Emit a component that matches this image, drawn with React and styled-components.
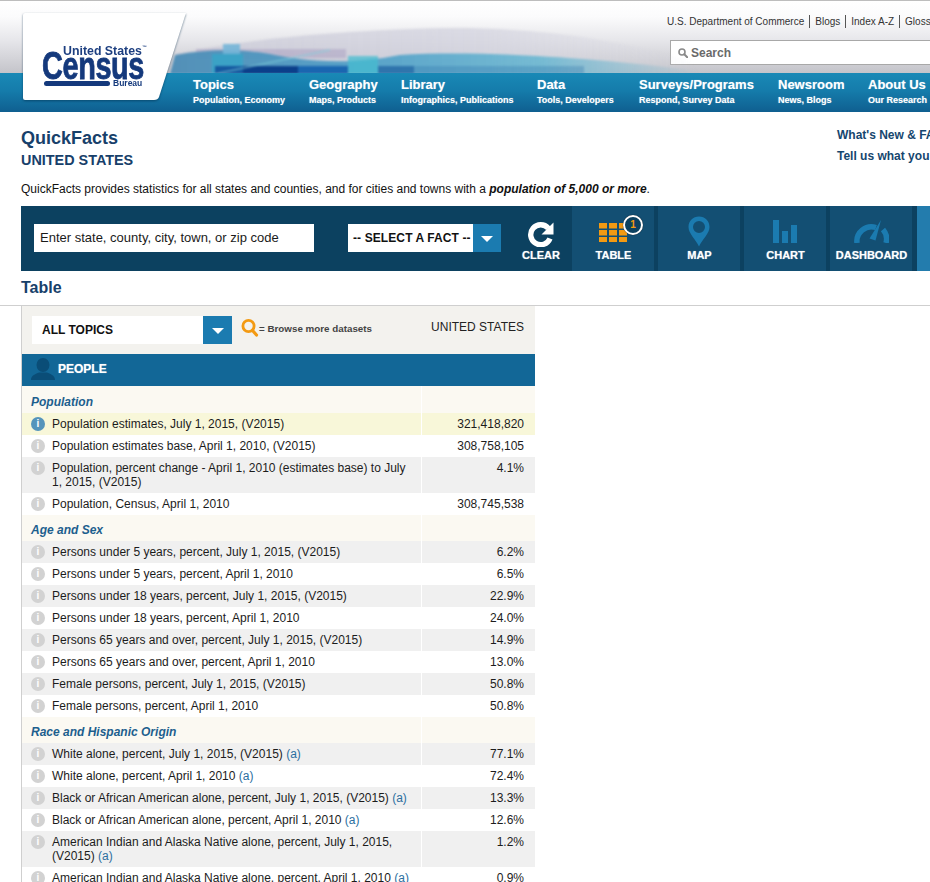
import React from "react";
import styled, { createGlobalStyle } from "styled-components";

const Global = createGlobalStyle`
  html, body { margin: 0; padding: 0; background: #fff; overflow: hidden; }
  body { font-family: "Liberation Sans", Arial, sans-serif; color: #1c1c1c; }
`;

const Page = styled.div`
  width: 930px;
  height: 882px;
  overflow: hidden;
  position: relative;
`;

const Header = styled.header`
  position: relative;
  height: 112px;
  border-top: 1px solid #bdbdbd;
  box-sizing: border-box;
  overflow: hidden;
  display: flex;
  flex-direction: column;
  background: #fff;
`;

const Masthead = styled.div`
  height: 72px;
  flex: none;
  box-sizing: border-box;
  padding: 14px 0 0 667px;
  background: linear-gradient(#ffffff 0, #fbfbfc 22%, #e6e6ea 55%, #c4c4ca 100%);
  position: relative;
  z-index: 1;
`;

const TopLinks = styled.div`
  display: flex;
  align-items: center;
  white-space: nowrap;
  font-size: 10px;
  line-height: 13px;
  height: 13px;
  color: #333;
`;

const TopLink = styled.span`
  padding: 0 5px 0 0;
  margin-right: 5px;
  border-right: ${(p) => (p.$last ? "none" : "1.5px solid #555")};
`;

const SearchBox = styled.div`
  margin: 12px 0 0 3px;
  width: 300px;
  height: 25px;
  background: #fff;
  border: 1px solid #a8a8a8;
  border-right: none;
  box-sizing: border-box;
  display: flex;
  align-items: center;
  gap: 3px;
  padding-left: 7px;
  color: #6a6a6a;
  font-size: 12px;
  font-weight: bold;
`;

const Wave = styled.svg`
  position: absolute;
  left: 170px;
  top: 20px;
  z-index: 2;
  filter: blur(1px);
`;

const Nav = styled.nav`
  height: 39px;
  flex: none;
  display: flex;
  gap: 24px;
  box-sizing: border-box;
  padding: 4px 0 0 193px;
  background: linear-gradient(#1989b6 0, #157cab 45%, #0f5f90 100%);
  white-space: nowrap;
  position: relative;
  z-index: 3;
`;

const NavItem = styled.div`
  width: ${(p) => p.$w}px;
  flex: none;
  color: #fff;
  text-shadow: 0 0 1px rgba(255, 255, 255, 0.5);
`;

const NavTitle = styled.div`
  font-size: 13px;
  font-weight: bold;
  line-height: 16px;
`;

const NavSub = styled.div`
  font-size: 9px;
  font-weight: bold;
  line-height: 12px;
  margin-top: 1px;
`;

const LogoCard = styled.div`
  position: absolute;
  left: 23px;
  top: 12px;
  width: 165px;
  height: 88px;
  z-index: 4;
  filter: drop-shadow(0 1px 1px rgba(0, 40, 70, 0.55));
`;

const LogoShape = styled.svg`
  position: absolute;
  inset: 0;
`;

const LogoUS = styled.div`
  position: absolute;
  left: 40px;
  top: 31px;
  font-size: 13px;
  font-weight: bold;
  color: #1d3f80;
  transform: scaleX(0.95);
  transform-origin: left;
  white-space: nowrap;
  line-height: 13px;
`;

const Tm = styled.sup`
  font-size: 5px;
  vertical-align: 6px;
  line-height: 0;
`;

const LogoCensus = styled.div`
  position: absolute;
  left: 19px;
  top: 35px;
  font-size: 38px;
  line-height: 36px;
  font-weight: bold;
  color: #14397c;
  -webkit-text-stroke: 0.8px #14397c;
  transform: scaleX(0.76);
  transform-origin: left;
  letter-spacing: -0.5px;
`;

const LogoBar = styled.div`
  position: absolute;
  left: 21px;
  top: 68px;
  width: 66px;
  height: 5px;
  border-radius: 3px;
  background: #14397c;
`;

const LogoBureau = styled.div`
  position: absolute;
  left: 90px;
  top: 66px;
  font-size: 8.5px;
  line-height: 9px;
  font-weight: bold;
  color: #14397c;
`;

const Intro = styled.section`
  padding: 15px 0 0 21px;
  height: 94px;
  box-sizing: border-box;
`;

const IntroTop = styled.div`
  display: flex;
  justify-content: space-between;
  height: 54px;
`;

const Title = styled.h1`
  margin: 0;
  font-size: 18px;
  line-height: 22px;
  font-weight: bold;
  color: #17406a;
`;

const SubTitle = styled.h2`
  margin: 1px 0 0;
  font-size: 14.4px;
  line-height: 20px;
  font-weight: bold;
  color: #17406a;
`;

const SideLinks = styled.div`
  width: 93px;
  flex: none;
  white-space: nowrap;
  font-size: 12px;
  font-weight: bold;
  color: #15466e;
  line-height: 21px;
  margin-top: -2px;
`;

const IntroText = styled.p`
  margin: 0;
  font-size: 12px;
  line-height: 16px;
  color: #111;
`;

const Toolbar = styled.div`
  margin-left: 21px;
  height: 65px;
  display: flex;
  align-items: stretch;
  background: #0c4160;
`;

const CityInput = styled.div`
  margin: 18px 0 0 13px;
  width: 280px;
  height: 28px;
  background: #fff;
  box-sizing: border-box;
  padding-left: 6px;
  font-size: 13px;
  line-height: 27px;
  color: #1a1a1a;
  flex: none;
`;

const FactSelect = styled.div`
  margin: 18px 0 0 34px;
  height: 28px;
  width: 153px;
  flex: none;
  display: flex;
  background: #fff;
  font-size: 12px;
  font-weight: bold;
  line-height: 28px;
  color: #111;
  white-space: nowrap;
  letter-spacing: 0.1px;
`;

const FactLabel = styled.div`
  flex: 1;
  padding-left: 5px;
`;

const ArrowBox = styled.div`
  width: ${(p) => p.$w}px;
  flex: none;
  background: #1b7bb0;
  display: flex;
  align-items: center;
  justify-content: center;
`;

const ArrowDown = styled.span`
  width: 0;
  height: 0;
  border-left: 6.5px solid transparent;
  border-right: 6.5px solid transparent;
  border-top: 6px solid #fff;
  margin-top: 1px;
`;

const ClearButton = styled.div`
  margin-left: 4px;
  width: 67px;
  padding-left: 4px;
  flex: none;
  display: flex;
  flex-direction: column;
  align-items: center;
  background: #0c4160;
  box-sizing: border-box;
`;

const Tile = styled.div`
  position: relative;
  width: 82px;
  flex: none;
  margin-right: 4px;
  background: #134f73;
  display: flex;
  flex-direction: column;
  align-items: center;
`;

const IconSlot = styled.div`
  height: 41px;
  display: flex;
  align-items: flex-end;
  justify-content: center;
  box-sizing: border-box;
  padding-bottom: ${(p) => p.$lift || 0}px;
`;

const TileLabel = styled.div`
  font-size: 11px;
  line-height: 13px;
  margin: 2px 0 0 1px;
  font-weight: bold;
  color: #fff;
  text-shadow: 0 0 1px rgba(255, 255, 255, 0.6);
  white-space: nowrap;
`;

const Badge = styled.div`
  position: absolute;
  left: 51px;
  top: 9px;
  width: 16px;
  height: 16px;
  border: 2px solid #fff;
  border-radius: 50%;
  background: #0c4160;
  color: #f39a12;
  font-size: 10px;
  font-weight: bold;
  line-height: 16px;
  text-align: center;
  box-shadow: 0 0 1px #000;
`;

const ToolbarEnd = styled.div`
  margin-left: 1px;
  flex: 1;
  background: #237cad;
`;

const TableHeading = styled.h3`
  margin: 0 0 0 21px;
  height: 34px;
  box-sizing: border-box;
  padding-top: 7px;
  font-size: 16px;
  line-height: 20px;
  font-weight: bold;
  color: #17406a;
`;

const Rule = styled.div`
  height: 1px;
  background: #cfcfcf;
`;

const TableBox = styled.div`
  margin-left: 21px;
  width: 514px;
  box-sizing: border-box;
  border-left: 1px solid #cfcfcf;
`;

const TableTop = styled.div`
  height: 48px;
  display: flex;
  background: #f3f2ee;
  box-sizing: border-box;
  padding: 10px 11px 0 10px;
`;

const TopicSelect = styled.div`
  width: 200px;
  height: 28px;
  flex: none;
  display: flex;
  background: #fff;
  font-size: 12px;
  font-weight: bold;
  line-height: 28px;
  color: #111;
`;

const TopicLabel = styled.div`
  flex: 1;
  padding-left: 10px;
`;

const Browse = styled.div`
  margin: 2px 0 0 9px;
  height: 20px;
  display: flex;
  align-items: center;
  font-size: 9.8px;
  font-weight: bold;
  color: #444;
  white-space: nowrap;
  flex: 1;
`;

const Geo = styled.div`
  font-size: 12px;
  line-height: 14px;
  color: #222;
  white-space: nowrap;
  margin-top: 4px;
`;

const GroupBar = styled.div`
  height: 32px;
  background: #126797;
  display: flex;
  align-items: center;
  gap: 3px;
  padding: 0 0 3px 9px;
  box-sizing: border-box;
  font-size: 12px;
  font-weight: bold;
  color: #fff;
  text-shadow: 0 0 1px rgba(255, 255, 255, 0.6);
`;

const rowColors = { section: "#fbf9f2", hi: "#f8f7d9", grey: "#f0f0f0", white: "#fff" };

const Row = styled.div`
  display: flex;
  background: ${(p) => rowColors[p.$kind]};
`;

const LabelCell = styled.div`
  width: 400px;
  flex: none;
  box-sizing: border-box;
  padding: ${(p) => (p.$section ? `${p.$top}px 9px 4px` : "4px 10px 4px 9px")};
  display: flex;
  gap: 7px;
  font-size: 12px;
  line-height: 14px;
  color: #1c1c1c;
  border-right: 1px solid #fff;
`;

const SectionTitle = styled.div`
  font-size: 12px;
  line-height: 14px;
  font-weight: bold;
  font-style: italic;
  color: #1d5f8e;
`;

const ValueCell = styled.div`
  flex: 1;
  box-sizing: border-box;
  padding: 4px 11px 4px 0;
  text-align: right;
  font-size: 12px;
  line-height: 14px;
  color: #1c1c1c;
`;

const InfoDot = styled.span`
  width: 14px;
  height: 14px;
  border-radius: 50%;
  flex: none;
  background: ${(p) => (p.$on ? "#5594bb" : "#d2d2d2")};
  color: #fff;
  font-weight: bold;
  font-size: 10px;
  line-height: 14px;
  text-align: center;
`;

const Note = styled.span`
  color: #2c6f9f;
`;

const PIN = "#1b7bb0";

const rows = [
  { s: "Population", top: 9 },
  { t: "Population estimates, July 1, 2015, (V2015)", v: "321,418,820", k: "hi", on: true },
  { t: "Population estimates base, April 1, 2010, (V2015)", v: "308,758,105", k: "white" },
  { t: "Population, percent change - April 1, 2010 (estimates base) to July 1, 2015, (V2015)", v: "4.1%", k: "grey" },
  { t: "Population, Census, April 1, 2010", v: "308,745,538", k: "white" },
  { s: "Age and Sex", top: 8 },
  { t: "Persons under 5 years, percent, July 1, 2015, (V2015)", v: "6.2%", k: "grey" },
  { t: "Persons under 5 years, percent, April 1, 2010", v: "6.5%", k: "white" },
  { t: "Persons under 18 years, percent, July 1, 2015, (V2015)", v: "22.9%", k: "grey" },
  { t: "Persons under 18 years, percent, April 1, 2010", v: "24.0%", k: "white" },
  { t: "Persons 65 years and over, percent, July 1, 2015, (V2015)", v: "14.9%", k: "grey" },
  { t: "Persons 65 years and over, percent, April 1, 2010", v: "13.0%", k: "white" },
  { t: "Female persons, percent, July 1, 2015, (V2015)", v: "50.8%", k: "grey" },
  { t: "Female persons, percent, April 1, 2010", v: "50.8%", k: "white" },
  { s: "Race and Hispanic Origin", top: 8 },
  { t: "White alone, percent, July 1, 2015, (V2015)", v: "77.1%", k: "grey", a: true },
  { t: "White alone, percent, April 1, 2010", v: "72.4%", k: "white", a: true },
  { t: "Black or African American alone, percent, July 1, 2015, (V2015)", v: "13.3%", k: "grey", a: true },
  { t: "Black or African American alone, percent, April 1, 2010", v: "12.6%", k: "white", a: true },
  { t: "American Indian and Alaska Native alone, percent, July 1, 2015, (V2015)", v: "1.2%", k: "grey", a: true },
  { t: "American Indian and Alaska Native alone, percent, April 1, 2010", v: "0.9%", k: "white", a: true },
];

const navItems = [
  ["Topics", "Population, Economy", 92],
  ["Geography", "Maps, Products", 68],
  ["Library", "Infographics, Publications", 112],
  ["Data", "Tools, Developers", 78],
  ["Surveys/Programs", "Respond, Survey Data", 115],
  ["Newsroom", "News, Blogs", 66],
  ["About Us", "Our Research", 80],
];

const SmallGlass = ({ size = 10, color = "#8a8a8a" }) => (
  <svg width={size} height={size} viewBox="0 0 10 10">
    <circle cx="4" cy="4" r="3" fill="none" stroke={color} strokeWidth="1.6" />
    <path d="M6.3 6.3 9.2 9.2" stroke={color} strokeWidth="2" strokeLinecap="round" />
  </svg>
);

const ClearIcon = () => (
  <svg width="26" height="26" viewBox="0 0 26 26">
    <path d="M20.300 7.200A10 10 0 1 0 22 17.500" fill="none" stroke="#fff" strokeWidth="5.400" />
    <path d="M25.500 1.500V13.500H13.500Z" fill="#fff" />
  </svg>
);

const TableIcon = () => (
  <svg width="28" height="19" viewBox="0 0 28 19" fill="#f39a12">
    {[0, 10, 20].map((x) =>
      [0, 7, 14].map((y) => <rect key={x + "-" + y} x={x} y={y} width="8" height="5.500" />)
    )}
  </svg>
);

const PinIcon = () => (
  <svg width="22" height="31" viewBox="0 0 22 31">
    <path
      fillRule="evenodd"
      fill={PIN}
      d="M11 0.500C5 0.500 0.500 5 0.500 11c0 6.500 7 12 10.500 19.500C14.500 23 21.500 17.500 21.500 11 21.500 5 17 0.500 11 0.500ZM11 5a6 6 0 1 1 0 12 6 6 0 0 1 0-12Z"
    />
  </svg>
);

const ChartIcon = () => (
  <svg width="24" height="23" viewBox="0 0 24 23" fill={PIN}>
    <rect x="0" y="0" width="6" height="23" />
    <rect x="9" y="11" width="6" height="12" />
    <rect x="18" y="5" width="6" height="18" />
  </svg>
);

const GaugeIcon = () => (
  <svg width="35" height="23" viewBox="0 0 35 23">
    <path d="M3 23A14.500 14.500 0 0 1 22 7.500" fill="none" stroke={PIN} strokeWidth="5.500" />
    <path d="M29 9.500A14.500 14.500 0 0 1 32 23" fill="none" stroke={PIN} strokeWidth="5.500" />
    <path d="M27 0 21.500 20.500 15.500 18.500Z" fill={PIN} />
  </svg>
);

const OrangeGlass = () => (
  <svg width="18" height="20" viewBox="0 0 18 20">
    <circle cx="7.500" cy="8" r="5.600" fill="none" stroke="#f39a12" strokeWidth="2.800" />
    <path d="M11.500 12.500 15.500 17" stroke="#f39a12" strokeWidth="3.200" strokeLinecap="round" />
  </svg>
);

const PersonIcon = () => (
  <svg width="24" height="22" viewBox="0 0 24 22" fill="#0a4d77">
    <ellipse cx="12" cy="7" rx="6.500" ry="7" />
    <path d="M0 22c0-5 5-6 8-7.500h8c3 1.500 8 2.500 8 7.500Z" />
  </svg>
);

const WaveArt = () => (
  <Wave width="530" height="53" viewBox="0 0 530 53">
    <defs>
      <linearGradient id="fade" x1="0" x2="1" y1="0" y2="0">
        <stop offset="0" stopColor="#4d8db6" stopOpacity="0.95" />
        <stop offset="0.35" stopColor="#4a9cc6" stopOpacity="0.9" />
        <stop offset="0.7" stopColor="#4eb0cf" stopOpacity="0.7" />
        <stop offset="1" stopColor="#4eb0cf" stopOpacity="0" />
      </linearGradient>
      <linearGradient id="haze" x1="0" x2="1" y1="0" y2="0">
        <stop offset="0" stopColor="#c4c4d4" stopOpacity="0.6" />
        <stop offset="0.6" stopColor="#d2d2de" stopOpacity="0.7" />
        <stop offset="1" stopColor="#d6d6e0" stopOpacity="0" />
      </linearGradient>
    </defs>
    <path d="M5 33C70 20 140 12 240 8 330 4 430 12 520 40L530 53H0Z" fill="url(#haze)" />
    <rect x="26" y="28" width="150" height="9" fill="#8d7fb0" opacity="0.3" />
    <path d="M5 34C40 28 70 28 100 33 125 38 170 46 230 34 300 30 400 34 530 50V53H0Z" fill="url(#fade)" />
    <rect x="53" y="23" width="17" height="10" fill="#76b6d8" opacity="0.9" />
    <rect x="42" y="33" width="31" height="20" fill="#35a5c8" opacity="0.8" />
    <rect x="178" y="35" width="30" height="18" fill="#45bcd0" opacity="0.75" />
    <rect x="45" y="45" width="28" height="8" fill="#1559a0" />
    <rect x="73" y="45" width="55" height="8" fill="#0b3f8a" />
    <rect x="128" y="45" width="50" height="8" fill="#1a66b0" />
    <rect x="208" y="45" width="36" height="8" fill="#2a6fa8" opacity="0.9" />
    <rect x="244" y="45" width="170" height="8" fill="#2a6fa8" opacity="0.3" />
    <path d="M45 53 160 29" stroke="#7fd0dd" strokeWidth="1.500" opacity="0.6" />
  </Wave>
);

export default function App() {
  return (
    <Page>
      <Global />
      <Header>
        <Masthead>
          <TopLinks>
            <TopLink>U.S. Department of Commerce</TopLink>
            <TopLink>Blogs</TopLink>
            <TopLink>Index A-Z</TopLink>
            <TopLink $last>Glossary</TopLink>
          </TopLinks>
          <SearchBox>
            <SmallGlass />
            Search
          </SearchBox>
        </Masthead>
        <Nav>
          {navItems.map(([title, sub, w]) => (
            <NavItem key={title} $w={w}>
              <NavTitle>{title}</NavTitle>
              <NavSub>{sub}</NavSub>
            </NavItem>
          ))}
        </Nav>
        <WaveArt />
        <LogoCard>
          <LogoShape width="165" height="88" viewBox="0 0 165 88">
            <path d="M2 0H163L136 84Q135 87 131 87H2Q0 87 0 85V2Q0 0 2 0Z" fill="#fff" />
          </LogoShape>
          <LogoUS>
            United States<Tm>™</Tm>
          </LogoUS>
          <LogoCensus>Census</LogoCensus>
          <LogoBar />
          <LogoBureau>Bureau</LogoBureau>
        </LogoCard>
      </Header>

      <Intro>
        <IntroTop>
          <div>
            <Title>QuickFacts</Title>
            <SubTitle>UNITED STATES</SubTitle>
          </div>
          <SideLinks>
            <div>What's New &amp; FAQs</div>
            <div>Tell us what you think</div>
          </SideLinks>
        </IntroTop>
        <IntroText>
          QuickFacts provides statistics for all states and counties, and for cities and towns with a{" "}
          <b>
            <i>population of 5,000 or more</i>
          </b>
          .
        </IntroText>
      </Intro>

      <Toolbar>
        <CityInput>Enter state, county, city, town, or zip code</CityInput>
        <FactSelect>
          <FactLabel>-- SELECT A FACT --</FactLabel>
          <ArrowBox $w={28}>
            <ArrowDown />
          </ArrowBox>
        </FactSelect>
        <ClearButton>
          <IconSlot>
            <ClearIcon />
          </IconSlot>
          <TileLabel>CLEAR</TileLabel>
        </ClearButton>
        <Tile>
          <IconSlot $lift={5}>
            <TableIcon />
          </IconSlot>
          <TileLabel>TABLE</TileLabel>
          <Badge>1</Badge>
        </Tile>
        <Tile>
          <IconSlot>
            <PinIcon />
          </IconSlot>
          <TileLabel>MAP</TileLabel>
        </Tile>
        <Tile>
          <IconSlot $lift={4}>
            <ChartIcon />
          </IconSlot>
          <TileLabel>CHART</TileLabel>
        </Tile>
        <Tile>
          <IconSlot $lift={4}>
            <GaugeIcon />
          </IconSlot>
          <TileLabel>DASHBOARD</TileLabel>
        </Tile>
        <ToolbarEnd />
      </Toolbar>

      <TableHeading>Table</TableHeading>
      <Rule />
      <TableBox>
        <TableTop>
          <TopicSelect>
            <TopicLabel>ALL TOPICS</TopicLabel>
            <ArrowBox $w={29}>
              <ArrowDown />
            </ArrowBox>
          </TopicSelect>
          <Browse>
            <OrangeGlass />= Browse more datasets
          </Browse>
          <Geo>UNITED STATES</Geo>
        </TableTop>
        <GroupBar>
          <PersonIcon />
          PEOPLE
        </GroupBar>
        {rows.map((r) =>
          r.s ? (
            <Row key={r.s} $kind="section">
              <LabelCell $section $top={r.top}>
                <SectionTitle>{r.s}</SectionTitle>
              </LabelCell>
              <ValueCell />
            </Row>
          ) : (
            <Row key={r.t} $kind={r.k}>
              <LabelCell>
                <InfoDot $on={r.on}>i</InfoDot>
                <span>
                  {r.t}
                  {r.a && <Note> (a)</Note>}
                </span>
              </LabelCell>
              <ValueCell>{r.v}</ValueCell>
            </Row>
          )
        )}
      </TableBox>
    </Page>
  );
}
